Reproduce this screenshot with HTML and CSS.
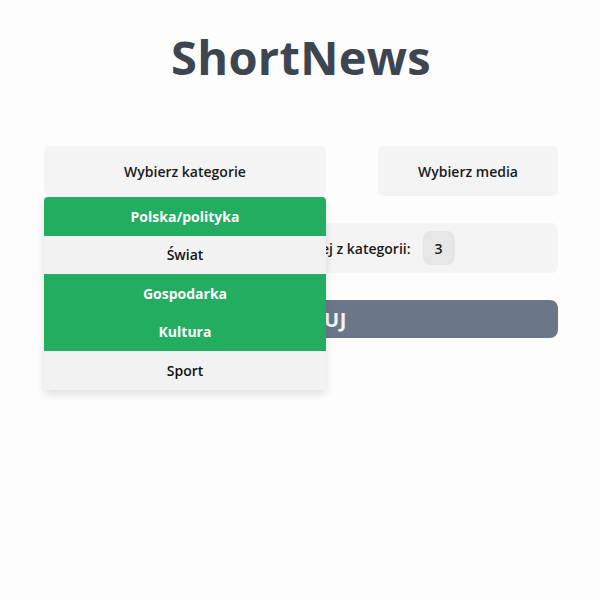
FILE: index.html
```html
<!DOCTYPE html>
<html lang="pl">
<head>
<meta charset="utf-8">
<title>ShortNews</title>
<link rel="stylesheet" href="styles.css">
</head>
<body>
<main class="page">
  <h1 class="title">ShortNews</h1>
  <div class="selects">
    <div class="select-wrap">
      <button class="select">Wybierz kategorie</button>
      <ul class="dropdown">
        <li class="opt on">Polska/polityka</li>
        <li class="opt">Świat</li>
        <li class="opt on">Gospodarka</li>
        <li class="opt on">Kultura</li>
        <li class="opt">Sport</li>
      </ul>
    </div>
    <button class="select media">Wybierz media</button>
  </div>
  <div class="count-row">
    <span class="count-label">Liczba wiadomości z każdej z kategorii:</span>
    <span class="count">3</span>
  </div>
  <button class="generate">GENERUJ</button>
</main>
</body>
</html>
```
FILE: styles.css
```css
* { box-sizing: border-box; }
html, body { margin: 0; background: #fdfdfd; }
body { min-height: 600px; font-family: "Open Sans", "Noto Sans", sans-serif; color: #1a1a1a; }
.page { width: 514px; min-height: 600px; margin-left: 44px; padding-top: 26px; }
.title {
  margin: 0 0 58px;
  text-align: center;
  font-family: "Open Sans", sans-serif;
  font-weight: 700;
  font-size: 47px;
  line-height: 62px;
  color: #3d4550;
  letter-spacing: 0.3px;
}
.selects { display: flex; justify-content: space-between; }
.select-wrap { position: relative; width: 282px; }
.select {
  display: flex; align-items: center; justify-content: center;
  width: 100%; height: 50px;
  border: none; border-radius: 6px;
  background: #f4f4f4;
  font-family: inherit; font-size: 14px; font-weight: 600; color: #1a1a1a;
}
.media { width: 180px; }
.dropdown {
  position: absolute; left: 0; top: 51px; width: 282px;
  margin: 0; padding: 0; list-style: none;
  border-radius: 4px 4px 3px 3px; overflow: hidden;
  box-shadow: 0 4px 8px rgba(0,0,0,0.12);
  z-index: 2;
}
.opt {
  height: 38.5px; display: flex; align-items: center; justify-content: center;
  background: #f2f2f2; font-size: 14px; font-weight: 600; color: #111;
}
.opt.on { background: #22ad60; color: #fff; font-weight: 700; }
.count-row {
  display: flex; align-items: center; justify-content: center; gap: 12px;
  height: 50px; margin-top: 27px; padding-left: 2px;
  background: #f4f4f4; border-radius: 6px;
  font-size: 14px; font-weight: 600;
}
.count {
  display: flex; align-items: center; justify-content: center;
  width: 32px; height: 34px; border-radius: 8px; background: #e6e6e6;
}
.generate {
  display: block; width: 100%; height: 38px; margin-top: 27px;
  border: none; border-radius: 8px; background: #6b7789;
  font-family: inherit; font-size: 20px; font-weight: 700; color: #f3f4f6;
  letter-spacing: 0.5px;
}
```
